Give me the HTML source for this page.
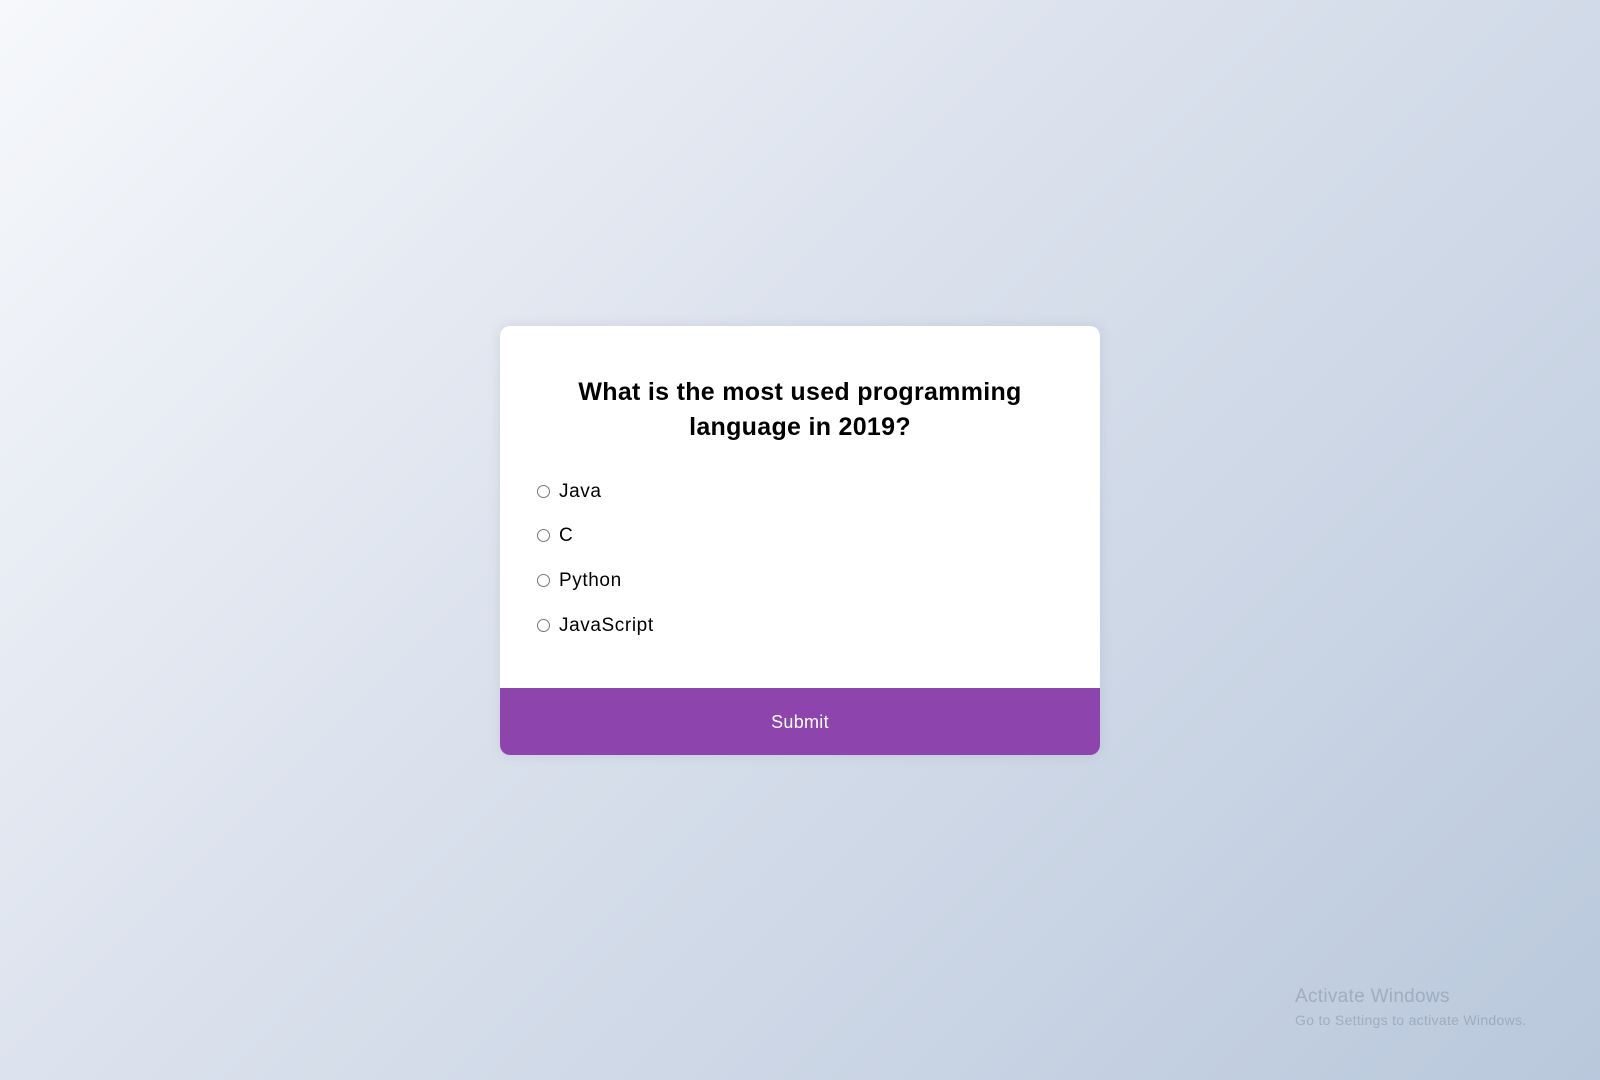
<!DOCTYPE html>
<html><head><meta charset="utf-8"><style>
html,body{margin:0;padding:0;width:1600px;height:1080px;overflow:hidden}
body{background:linear-gradient(135deg,#f6f8fb 0%,#dde3ee 40%,#b9c8dc 100%);font-family:"Liberation Sans",sans-serif;position:relative}
.card{position:absolute;left:500px;top:326px;width:600px;height:429px;background:#fff;border-radius:10px;box-shadow:0 0 12px rgba(100,100,120,0.15);overflow:hidden}
h2{position:absolute;left:0;right:0;top:49px;margin:0;text-align:center;font-size:25px;line-height:35px;font-weight:bold;color:#000;letter-spacing:0.3px}
.opt{position:absolute;left:36px;font-size:19px;color:#000;height:24px;line-height:24px}
.opt i{position:absolute;left:1px;top:6px;width:11px;height:11px;border:1px solid #777;border-radius:50%}
.opt span{position:absolute;left:23px;top:1px;white-space:nowrap;letter-spacing:0.6px}
.btn{position:absolute;left:0;right:0;bottom:0;height:67px;background:#8e44ad;color:#fff;text-align:center;line-height:68px;font-size:18px;letter-spacing:0.3px}
.win{position:absolute;left:1295px;color:rgba(130,140,160,0.5);letter-spacing:0.3px}
</style></head><body>
<div class="card">
<h2>What is the most used programming<br>language in 2019?</h2>
<div class="opt" style="top:153px"><i></i><span>Java</span></div>
<div class="opt" style="top:197px"><i></i><span>C</span></div>
<div class="opt" style="top:242px"><i></i><span>Python</span></div>
<div class="opt" style="top:287px"><i></i><span>JavaScript</span></div>
<div class="btn">Submit</div>
</div>
<div class="win" style="top:986px;font-size:19px">Activate Windows</div>
<div class="win" style="top:1012px;font-size:14px">Go to Settings to activate Windows.</div>
</body></html>
